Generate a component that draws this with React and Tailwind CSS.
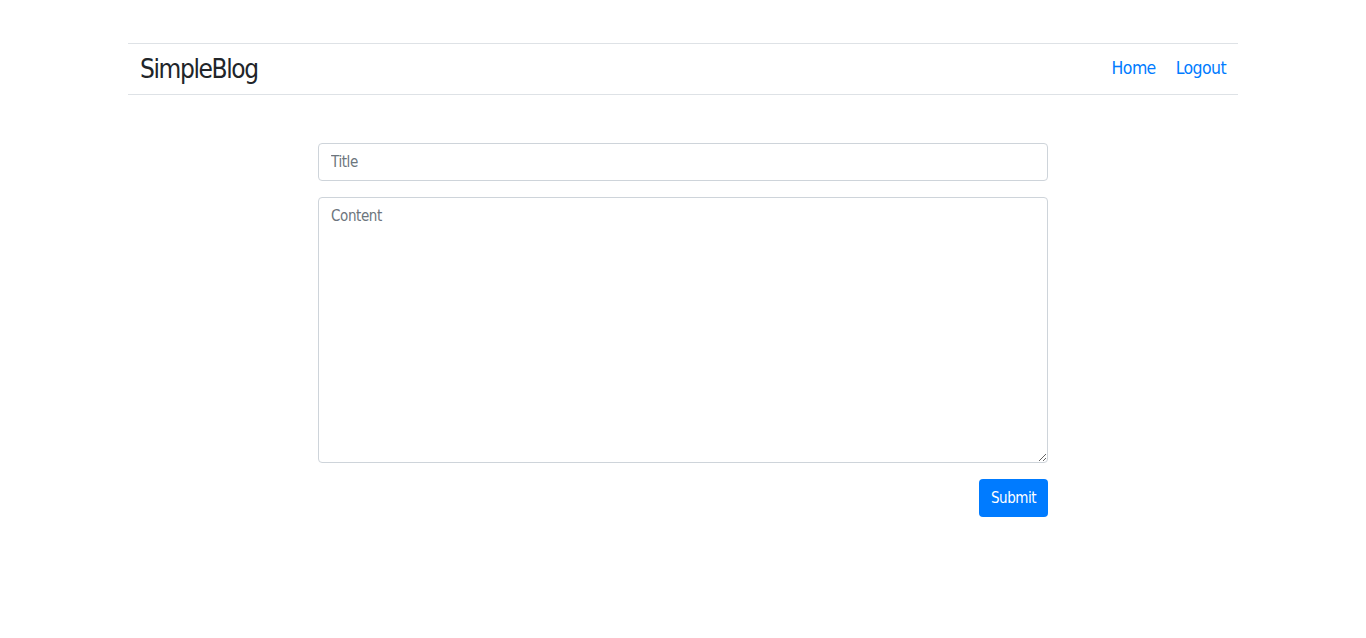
export default function App() {
  const font = { fontFamily: '"DejaVu Sans Condensed", "Liberation Sans Narrow", "Roboto", sans-serif' };
  return (
    <div className="min-h-screen bg-white text-[#212529]" style={font}>
      <div className="mx-auto w-[1110px] pt-[43px]">
        <nav className="flex h-[52px] items-center justify-between border-y border-[#dee2e6] px-3">
          <span className="text-[26px] leading-none tracking-[-1.4px] text-[#212529]">SimpleBlog</span>
          <div className="mb-[1px] flex items-center gap-5 text-[17.5px] leading-none tracking-[-0.6px] text-[#007bff]">
            <a href="#">Home</a>
            <a href="#">Logout</a>
          </div>
        </nav>
        <form className="mx-auto mt-[48px] flex w-[730px] flex-col" onSubmit={(e) => e.preventDefault()}>
          <input
            type="text"
            placeholder="Title"
            className="h-[38px] w-full rounded border border-[#ced4da] px-3 text-[15px] tracking-[-0.4px] text-[#495057] placeholder-[#6c757d] outline-none"
          />
          <textarea
            placeholder="Content"
            className="mt-4 h-[266px] w-full rounded border border-[#ced4da] px-3 py-[7px] text-[15px] tracking-[-0.4px] text-[#495057] placeholder-[#6c757d] outline-none"
          />
          <div className="mt-4 flex justify-end">
            <button
              type="submit"
              className="h-[38px] w-[69px] rounded bg-[#007bff] text-[15px] tracking-[-0.5px] text-white"
            >
              Submit
            </button>
          </div>
        </form>
      </div>
    </div>
  );
}
